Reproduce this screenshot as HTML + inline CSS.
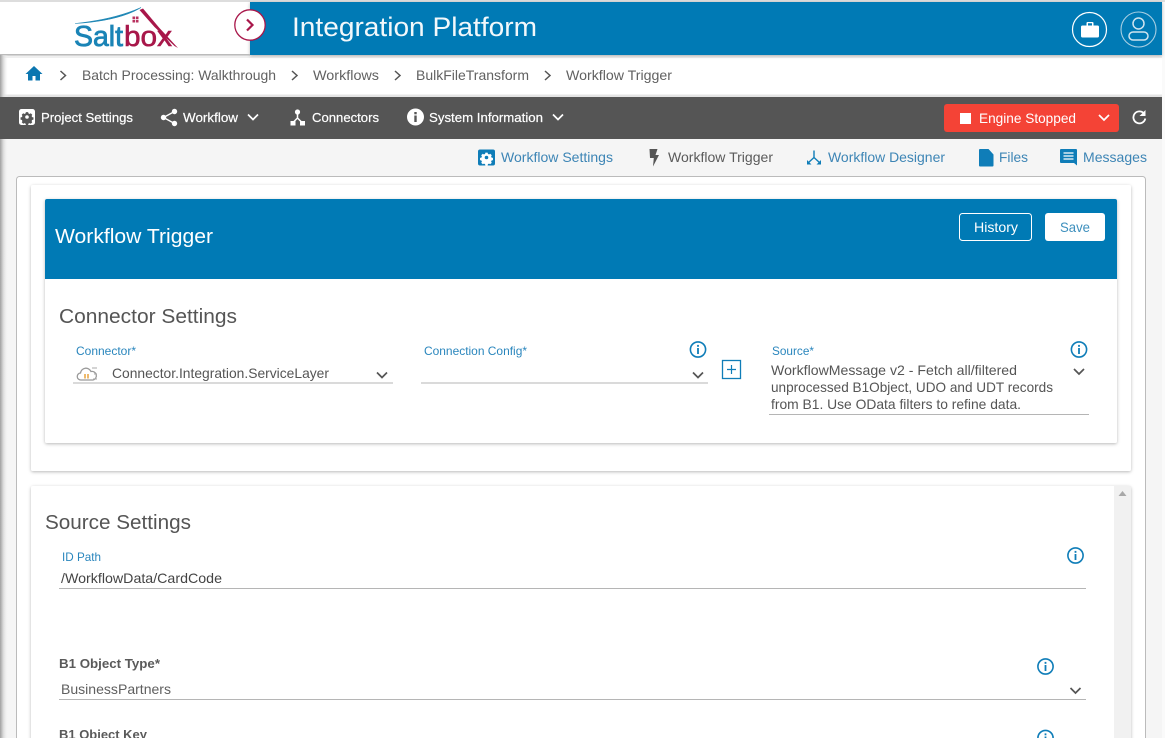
<!DOCTYPE html>
<html><head><meta charset="utf-8"><style>
html,body{margin:0;padding:0;width:1165px;height:738px;overflow:hidden;background:#f5f5f5}
svg{display:block;position:absolute;left:0;top:0}
text{font-family:"Liberation Sans",sans-serif;white-space:pre}
.bc{font-size:14px;fill:#616161}
.tb{font-size:13px;fill:#fff;stroke:#fff;stroke-width:.2px}
.tab{font-size:14px;fill:#3d85b5}
.lab{font-size:12px;fill:#2a86bd}
.val{font-size:14px;fill:#555}
.h{font-size:20px;fill:#555}
.bold{font-size:13px;font-weight:bold;fill:#5a5a5a}
.chev{fill:none;stroke-width:1.7}
</style></head><body>
<svg width="1165" height="738" viewBox="0 0 1165 738" xmlns="http://www.w3.org/2000/svg">
<defs>
<linearGradient id="ls" x1="0" x2="1" y1="0" y2="0"><stop offset="0" stop-color="#a0a0a0"/><stop offset=".4" stop-color="#d8d8d8"/><stop offset="1" stop-color="#f5f5f5" stop-opacity="0"/></linearGradient>
<filter id="sh" x="-5%" y="-20%" width="110%" height="140%"><feDropShadow dx="0" dy="1" stdDeviation="1.500" flood-color="#000" flood-opacity=".28"/></filter>
<g id="info"><circle r="7.600" fill="none" stroke="#0f7db8" stroke-width="1.600"/><rect x="-.9" y="-1.500" width="1.800" height="6" fill="#0f7db8"/><rect x="-.9" y="-4.600" width="1.800" height="1.900" fill="#0f7db8"/></g>
<path id="ch" d="M-5-2.500 0 2.500 5-2.500" class="chev"/>
<path id="cog" d="M-1.300-5.800h2.600l.4 1.600 1.300.6 1.400-.8 1.800 1.800-.8 1.400.6 1.300 1.600.4v2.600l-1.600.4-.6 1.300.8 1.400-1.800 1.800-1.400-.8-1.300.6-.4 1.600h-2.600l-.4-1.600-1.300-.6-1.400.8-1.800-1.800.8-1.400-.6-1.300-1.600-.4v-2.600l1.600-.4.6-1.300-.8-1.400 1.800-1.800 1.400.8 1.300-.6z"/>
</defs>

<rect width="1165" height="738" fill="#f5f5f5"/>
<rect x="0" y="0" width="1165" height="2" fill="#ddd"/>
<rect x="1162" y="2" width="3" height="736" fill="#fafafa"/>

<!-- breadcrumb -->
<rect x="0" y="55" width="1162" height="42" fill="#fff"/>
<rect x="0" y="55" width="1162" height="3" fill="#e4e4e4" opacity=".6"/>
<path d="M34 66l-8.500 8h2.500v6.500h4.500v-4.500h3v4.500h4.500v-6.500h2.500z" fill="#0b76b0"/>
<g stroke="#555" fill="none" stroke-width="1.500">
<path d="M60.500 71l5 4.500-5 4.500M292 71l5 4.500-5 4.500M395 71l5 4.500-5 4.500M545 71l5 4.500-5 4.500"/>
</g>
<text class="bc" x="82" y="80" textLength="194" lengthAdjust="spacingAndGlyphs">Batch Processing: Walkthrough</text>
<text class="bc" x="313" y="80" textLength="66" lengthAdjust="spacingAndGlyphs">Workflows</text>
<text class="bc" x="416" y="80" textLength="113" lengthAdjust="spacingAndGlyphs">BulkFileTransform</text>
<text class="bc" x="566" y="80" textLength="106" lengthAdjust="spacingAndGlyphs">Workflow Trigger</text>

<!-- header -->
<rect x="0" y="2" width="250" height="53" fill="#fff"/>
<rect x="250" y="2" width="912" height="53" fill="#007ab5" filter="url(#sh)"/>
<rect x="0" y="54" width="250" height="1.500" fill="#bbb"/>
<path d="M75 23.500C100 21 122 16 141 7.500 124 18 100 22 75 23.500z" fill="#1f87b5" stroke="#1f87b5" stroke-width=".6"/>
<path d="M139.500 10l3.500-1.500 16 19 19 20.500-3.500-2-20-19-15-17z" fill="#a8174a"/>
<path d="M132.500 16.500h6v6h-6z" fill="#b8325f"/><path d="M135.500 16.500v6M132.500 19.500h6" stroke="#fff" stroke-width=".8"/>
<text x="74" y="46" font-size="29" fill="#1a84b6" stroke="#1a84b6" stroke-width=".8" textLength="49" lengthAdjust="spacingAndGlyphs">Salt</text>
<text x="124" y="46" font-size="29" fill="#a8174a" stroke="#a8174a" stroke-width=".6" textLength="48" lengthAdjust="spacingAndGlyphs">box</text>
<circle cx="250" cy="25" r="15.200" fill="#fff" stroke="#a8174a" stroke-width="1.300"/>
<path d="M247 19.500l5.500 5.500-5.500 5.500" fill="none" stroke="#a8174a" stroke-width="2.200"/>
<text x="292" y="36" font-size="27" fill="#f2f8fb" textLength="245" lengthAdjust="spacingAndGlyphs">Integration Platform</text>
<circle cx="1089.500" cy="29.500" r="17" fill="none" stroke="#fff" stroke-width="1.200"/>
<path d="M1082.500 25.500h4v-2.500a1 1 0 0 1 1-1h5a1 1 0 0 1 1 1v2.500h4a1.500 1.500 0 0 1 1.500 1.500v9a1.500 1.500 0 0 1-1.500 1.500h-15a1.500 1.500 0 0 1-1.500-1.500v-9a1.500 1.500 0 0 1 1.500-1.500zM1088 23.200v2.300h4v-2.300z" fill="#fff" fill-rule="evenodd"/>
<circle cx="1138.500" cy="29.500" r="17.500" fill="none" stroke="#a8cfe3" stroke-width="1.100"/>
<circle cx="1138.500" cy="23.500" r="5.500" fill="none" stroke="#cfe4ef" stroke-width="1.500"/>
<rect x="1129" y="32" width="19" height="8" rx="4" fill="none" stroke="#cfe4ef" stroke-width="1.500"/>

<!-- toolbar -->
<rect x="0" y="97" width="1162" height="42" fill="#555"/>
<rect x="0" y="94.500" width="1162" height="2.500" fill="#bbb" opacity=".4"/>
<rect x="19" y="109" width="16" height="16" rx="2.500" fill="#fff"/>
<use href="#cog" transform="translate(27 117) scale(.85)" fill="#555"/>
<circle cx="27" cy="117" r="1.800" fill="#fff"/>
<text class="tb" x="41" y="122" textLength="92" lengthAdjust="spacingAndGlyphs">Project Settings</text>
<g fill="#fff"><circle cx="163.500" cy="117.500" r="2.700"/><circle cx="174.500" cy="111.500" r="2.700"/><circle cx="174.500" cy="123.500" r="2.700"/></g>
<path d="M174.500 111.500l-11 6 11 6" fill="none" stroke="#fff" stroke-width="1.400"/>
<text class="tb" x="183" y="122" textLength="55" lengthAdjust="spacingAndGlyphs">Workflow</text>
<use href="#ch" x="253" y="117" stroke="#fff"/>
<g fill="#fff"><circle cx="297.500" cy="112" r="2.600"/><rect x="290.500" y="121" width="5" height="4.500"/><rect x="300" y="121" width="5" height="4.500"/></g>
<path d="M297.500 112v6l-5 5M297.500 118l5 5" fill="none" stroke="#fff" stroke-width="1.500"/>
<text class="tb" x="312" y="122" textLength="67" lengthAdjust="spacingAndGlyphs">Connectors</text>
<circle cx="415.500" cy="117" r="8.500" fill="#fff"/>
<rect x="414.300" y="115.500" width="2.400" height="6.500" fill="#555"/><rect x="414.300" y="112" width="2.400" height="2.300" fill="#555"/>
<text class="tb" x="429" y="122" textLength="114" lengthAdjust="spacingAndGlyphs">System Information</text>
<use href="#ch" x="558" y="117" stroke="#fff"/>
<rect x="944" y="104" width="175" height="28" rx="3" fill="#f44336"/>
<rect x="960" y="113" width="11" height="11" fill="#fff"/>
<text x="979" y="123" font-size="14" fill="#fff" textLength="97" lengthAdjust="spacingAndGlyphs">Engine Stopped</text>
<use href="#ch" x="1104" y="117.500" stroke="#fff" style="stroke-width:2"/>
<path d="M1144 113.500a6 6 0 1 0 1.300 5" fill="none" stroke="#fff" stroke-width="1.800"/>
<path d="M1145.500 110v6h-6z" fill="#fff"/>

<!-- tabs -->
<rect x="478" y="149.500" width="17" height="16" rx="2" fill="#0f7db8"/>
<use href="#cog" transform="translate(486.500 157.500) scale(.85)" fill="#fff"/>
<circle cx="486.500" cy="157.500" r="1.800" fill="#0f7db8"/>
<text class="tab" x="501" y="162" textLength="112" lengthAdjust="spacingAndGlyphs">Workflow Settings</text>
<path d="M649.500 149h8l-2 6h3.500l-6 11.500.8-8.500h-3.800z" fill="#555"/>
<text class="tab" x="668" y="162" textLength="105" lengthAdjust="spacingAndGlyphs" style="fill:#5a5a5a">Workflow Trigger</text>
<path d="M814 150.500v7l-6 5.500M814 157.500l6 5.500" fill="none" stroke="#0f7db8" stroke-width="1.400"/>
<path d="M807 160v4.500h4.500zM821 160v4.500h-4.500z" fill="#0f7db8"/>
<text class="tab" x="828" y="162" textLength="117" lengthAdjust="spacingAndGlyphs">Workflow Designer</text>
<path d="M980 149h8.500l5 5.500v11a1 1 0 0 1-1 1h-12.500a1 1 0 0 1-1-1v-15.500a1 1 0 0 1 1-1z" fill="#0f7db8"/>
<text class="tab" x="999" y="162" textLength="29" lengthAdjust="spacingAndGlyphs">Files</text>
<path d="M1061 149h15a1 1 0 0 1 1 1v15.500l-3-2.500h-13a1 1 0 0 1-1-1v-12a1 1 0 0 1 1-1z" fill="#0f7db8"/>
<path d="M1063.500 153h10M1063.500 156h10M1063.500 159h10" stroke="#fff" stroke-width="1.300"/>
<text class="tab" x="1083" y="162" textLength="64" lengthAdjust="spacingAndGlyphs">Messages</text>

<!-- outer panel -->
<rect x="16.500" y="176.500" width="1129" height="570" rx="3" fill="#fff" stroke="#bbb"/>

<!-- card 1 -->
<rect x="31" y="185" width="1100" height="286" rx="2" fill="#fff" filter="url(#sh)"/>
<rect x="45" y="199" width="1072" height="244" rx="2" fill="#fff" filter="url(#sh)"/>
<path d="M47 199h1068a2 2 0 0 1 2 2v78H45v-78a2 2 0 0 1 2-2z" fill="#007ab5"/>
<text x="55" y="243" font-size="20" fill="#fff" textLength="158" lengthAdjust="spacingAndGlyphs">Workflow Trigger</text>
<rect x="959.500" y="213.500" width="72" height="27" rx="3" fill="none" stroke="#fff"/>
<text x="974" y="232" font-size="14" fill="#fff" textLength="44" lengthAdjust="spacingAndGlyphs">History</text>
<rect x="1045" y="213" width="60" height="28" rx="3" fill="#fff"/>
<text x="1060" y="232" font-size="14" fill="#3d8fbd" textLength="30" lengthAdjust="spacingAndGlyphs">Save</text>

<text class="h" x="59" y="323" textLength="178" lengthAdjust="spacingAndGlyphs">Connector Settings</text>
<text class="lab" x="76" y="355" textLength="60" lengthAdjust="spacingAndGlyphs">Connector*</text>
<text class="lab" x="424" y="355" textLength="103" lengthAdjust="spacingAndGlyphs">Connection Config*</text>
<text class="lab" x="772" y="355" textLength="42" lengthAdjust="spacingAndGlyphs">Source*</text>
<path d="M81 380a3.500 3.500 0 0 1-.5-7 5.500 5.500 0 0 1 10.500-1.500 4 4 0 0 1 2 8.500z" fill="#fff" stroke="#999" stroke-width="1.300"/>
<path d="M85 374v4.500M88 374v4.500" stroke="#e8a33d" stroke-width="1.500"/>
<path d="M92 368h5M94 374h3M93 379h4" stroke="#aaa" stroke-width=".9"/>
<text class="val" x="112" y="378" textLength="217" lengthAdjust="spacingAndGlyphs">Connector.Integration.ServiceLayer</text>
<use href="#ch" x="382" y="375" stroke="#555"/>
<rect x="73" y="382.500" width="320" height="1" fill="#b5b5b5"/>
<use href="#ch" x="698" y="375" stroke="#555"/>
<rect x="421" y="382.500" width="287" height="1" fill="#b5b5b5"/>
<use href="#info" x="698" y="349.500"/>
<use href="#info" x="1079" y="349.500"/>
<rect x="722.500" y="360.500" width="18" height="18" fill="#fff" stroke="#0f7db8" stroke-width="1.300"/>
<path d="M731.500 365v9M727 369.500h9" stroke="#0f7db8" stroke-width="1.200"/>
<text class="val" x="771" y="375" textLength="246" lengthAdjust="spacingAndGlyphs">WorkflowMessage v2 - Fetch all/filtered</text>
<text class="val" x="771" y="392" textLength="282" lengthAdjust="spacingAndGlyphs">unprocessed B1Object, UDO and UDT records</text>
<text class="val" x="771" y="409" textLength="250" lengthAdjust="spacingAndGlyphs">from B1. Use OData filters to refine data.</text>
<use href="#ch" x="1079" y="371.500" stroke="#555"/>
<rect x="769" y="414" width="320" height="1" fill="#b5b5b5"/>

<!-- card 2 -->
<rect x="31" y="486" width="1100" height="270" rx="2" fill="#fff" filter="url(#sh)"/>
<rect x="1114" y="486" width="17" height="252" fill="#f1f1f1"/>
<path d="M1122.500 491l4 5h-8z" fill="#a8a8a8"/>
<text class="h" x="45" y="529" textLength="146" lengthAdjust="spacingAndGlyphs">Source Settings</text>
<text class="lab" x="62" y="561" textLength="39" lengthAdjust="spacingAndGlyphs">ID Path</text>
<text x="61" y="583" font-size="14" fill="#444" textLength="161" lengthAdjust="spacingAndGlyphs">/WorkflowData/CardCode</text>
<rect x="59" y="588" width="1027" height="1" fill="#b5b5b5"/>
<use href="#info" x="1075.500" y="555.500"/>
<text class="bold" x="59" y="668" textLength="101" lengthAdjust="spacingAndGlyphs">B1 Object Type*</text>
<text class="val" x="61" y="694" textLength="110" lengthAdjust="spacingAndGlyphs" style="fill:#5f5f5f">BusinessPartners</text>
<use href="#ch" x="1075.500" y="690.500" stroke="#555"/>
<rect x="59" y="699" width="1027" height="1" fill="#b5b5b5"/>
<use href="#info" x="1045.500" y="666.500"/>
<text class="bold" x="59" y="739" textLength="88" lengthAdjust="spacingAndGlyphs">B1 Object Key</text>
<use href="#info" x="1045.500" y="738"/>

<!-- left edge shadow -->
<rect x="0" y="55" width="8" height="42" fill="url(#ls)"/>
<rect x="0" y="139" width="8" height="599" fill="url(#ls)"/>
</svg>
</body></html>
